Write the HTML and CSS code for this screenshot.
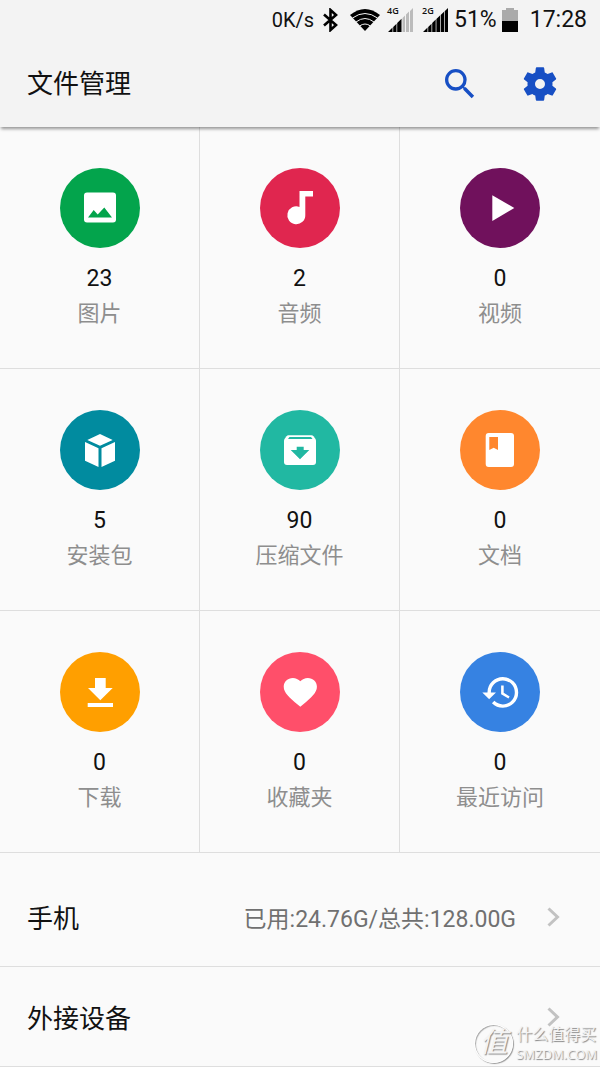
FILE: index.html
```html
<!DOCTYPE html>
<html lang="zh-CN">
<head>
<meta charset="utf-8">
<meta name="viewport" content="width=device-width, initial-scale=1">
<title>文件管理</title>
<link rel="stylesheet" href="styles.css">
</head>
<body>
<div class="status">
  <span class="speed">0K/s</span>
  <svg class="bluetooth" width="15" height="24" viewBox="0 0 15 24" aria-hidden="true"><path d="M1 6.500 L13 17 L7.500 22 V2 L13 7 L1 17.500" fill="none" stroke="#000" stroke-width="2.600"/></svg>
  <svg class="wifi" width="30" height="22" viewBox="0 0 30 22" aria-hidden="true">
    <path d="M15 22 L0 6 Q15 -6 30 6 Z" fill="#000"/>
    <path d="M2.500 9 Q15 0 27.500 9 M6 13 Q15 6 24 13 M9.500 17 Q15 13 20.500 17" fill="none" stroke="#f3f3f3" stroke-width="1"/>
  </svg>
  <span class="signal">
    <svg width="26" height="24" viewBox="0 0 26 24" aria-hidden="true"><path d="M0 24 L4.500 19.500 V24Z M5.200 24 V19 L8.500 15.700 V24Z M9.200 24 V15 L13.500 10.700 V24Z" fill="#000"/><path d="M14.500 24 V10 L17 7.500 V24Z M18 24 V6.500 L21 3.500 V24Z M22 24 V3 L25 0 V24Z" fill="#bbb"/></svg>
    <span class="network">4G</span>
  </span>
  <span class="signal">
    <svg width="26" height="24" viewBox="0 0 26 24" aria-hidden="true"><path d="M0 24 L4.500 19.500 V24Z M5.200 24 V19 L8.500 15.700 V24Z M9.200 24 V15 L12.700 11.500 V24Z M13.400 24 V11 L17 7.400 V24Z M17.700 24 V7 L21 3.700 V24Z M21.700 24 V3.300 L25 0 V24Z" fill="#000"/></svg>
    <span class="network">2G</span>
  </span>
  <span class="percent">51%</span>
  <svg class="battery" width="16" height="24" viewBox="0 0 16 24" aria-hidden="true"><path d="M0 2H4V0H12V2H16V13H0Z" fill="#aaa"/><path d="M0 13H16V24H0Z" fill="#000"/></svg>
  <time class="clock">17:28</time>
</div>

<header class="appbar">
  <h1 class="title">文件管理</h1>
  <button class="action" type="button" aria-label="搜索"><svg width="40" height="40" viewBox="0 0 24 24"><path d="M15.500 14h-.79l-.28-.27A6.471 6.471 0 0 0 16 9.500 6.500 6.500 0 1 0 9.500 16c1.610 0 3.090-.59 4.230-1.570l.27.28v.79l5 4.990L20.490 19l-4.990-5zm-6 0C7.010 14 5 11.990 5 9.500S7.010 5 9.500 5 14 7.010 14 9.500 11.990 14 9.500 14z"/></svg></button>
  <button class="action" type="button" aria-label="设置"><svg width="40" height="40" viewBox="0 0 24 24"><path d="M19.430 12.980c.04-.32.07-.64.07-.98s-.03-.66-.07-.98l2.110-1.650c.19-.15.24-.42.12-.64l-2-3.460c-.12-.22-.39-.3-.61-.22l-2.490 1c-.52-.4-1.080-.73-1.690-.98l-.38-2.650A.488.488 0 0 0 14 2h-4c-.25 0-.46.18-.49.42l-.38 2.650c-.61.25-1.170.59-1.690.98l-2.490-1c-.23-.09-.49 0-.61.22l-2 3.460c-.13.22-.07.49.12.64l2.110 1.650c-.04.32-.07.65-.07.98s.03.66.07.98l-2.110 1.650c-.19.15-.24.42-.12.64l2 3.460c.12.22.39.3.61.22l2.490-1c.52.4 1.080.73 1.690.98l.38 2.650c.03.24.24.42.49.42h4c.25 0 .46-.18.49-.42l.38-2.650c.61-.25 1.170-.59 1.690-.98l2.490 1c.23.09.49 0 .61-.22l2-3.460c.12-.22.07-.49-.12-.64l-2.110-1.650zM12 15a3 3 0 1 1 0-6 3 3 0 0 1 0 6z"/></svg></button>
</header>

<main>
  <nav class="grid" aria-label="分类">
    <a class="cell" href="#images">
      <svg class="icon green" viewBox="0 0 80 80"><rect x="24" y="24.500" width="32" height="30" rx="3"/><path class="cut" d="M28 49.500 L33.700 42 L37.700 46.500 L44.300 39.500 L52 49.500Z"/></svg>
      <span class="count">23</span><span class="label">图片</span>
    </a>
    <a class="cell" href="#audio">
      <svg class="icon red" viewBox="0 0 80 80"><path d="M39.500 23H53V28.500H45.300V47A9 9 0 1 1 39.500 38.900Z"/></svg>
      <span class="count">2</span><span class="label">音频</span>
    </a>
    <a class="cell" href="#video">
      <svg class="icon purple" viewBox="0 0 80 80"><path d="M32.300 27.300 L54.300 40 L32.300 53Z"/></svg>
      <span class="count">0</span><span class="label">视频</span>
    </a>
    <a class="cell" href="#packages">
      <svg class="icon teal" viewBox="0 0 80 80"><path d="M40 24 L52.700 30 L40 35.700 L27.300 30Z M25 32 L38.500 38.300 V57 L25 50.700Z M55 32 L41.500 38.300 V57 L55 50.700Z"/></svg>
      <span class="count">5</span><span class="label">安装包</span>
    </a>
    <a class="cell" href="#archives">
      <svg class="icon mint" viewBox="0 0 80 80"><path d="M28.500 25.300H51.500Q52.700 25.300 53.500 26.300L55.300 28.700Q56 29.700 56 31V52Q56 55 53 55H27Q24 55 24 52V31Q24 29.700 24.700 28.700L26.500 26.300Q27.300 25.300 28.500 25.300Z"/><path class="cut" d="M29.500 27H51L52.500 29H28Z M36.700 36.700H43.700V40H49.300L40 49.300L30.700 40H36.700Z"/></svg>
      <span class="count">90</span><span class="label">压缩文件</span>
    </a>
    <a class="cell" href="#documents">
      <svg class="icon orange" viewBox="0 0 80 80"><rect x="25.700" y="23" width="28.300" height="34" rx="3"/><path class="cut" d="M29.300 27H38V40L33.700 37.700L29.300 40Z"/></svg>
      <span class="count">0</span><span class="label">文档</span>
    </a>
    <a class="cell" href="#downloads">
      <svg class="icon amber" viewBox="0 0 80 80"><path d="M35 26H45.700V36H52.700L40.300 48.300L28 36H35Z M27.700 51H53V55H27.700Z"/></svg>
      <span class="count">0</span><span class="label">下载</span>
    </a>
    <a class="cell" href="#favorites">
      <svg class="icon pink" viewBox="0 0 80 80"><path transform="translate(20.400 21.300) scale(1.660 1.570)" d="M12 21.350l-1.450-1.320C5.400 15.360 2 12.280 2 8.500 2 5.420 4.420 3 7.500 3c1.740 0 3.410.81 4.500 2.090C13.090 3.810 14.760 3 16.500 3 19.580 3 22 5.420 22 8.500c0 3.780-3.400 6.860-8.550 11.540L12 21.350z"/></svg>
      <span class="count">0</span><span class="label">收藏夹</span>
    </a>
    <a class="cell" href="#recent">
      <svg class="icon blue" viewBox="0 0 80 80"><path transform="translate(20.600 19.900) scale(1.710)" d="M13 3a9 9 0 0 0-9 9H1l3.890 3.890.07.14L9 12H6c0-3.870 3.130-7 7-7s7 3.130 7 7-3.130 7-7 7c-1.930 0-3.680-.79-4.940-2.060l-1.420 1.420A8.954 8.954 0 0 0 13 21a9 9 0 0 0 0-18zm-1 5v5l4.280 2.540.72-1.210-3.500-2.080V8H12z"/></svg>
      <span class="count">0</span><span class="label">最近访问</span>
    </a>
  </nav>

  <div class="storage">
    <a class="row" href="#phone">
      <span class="name">手机</span>
      <span class="usage">已用:24.76G/总共:128.00G</span>
      <svg class="chevron" width="13" height="20" viewBox="0 0 13 20" aria-hidden="true"><path d="M1.500 1.500 L10.500 10 L1.500 18.500"/></svg>
    </a>
    <a class="row" href="#external">
      <span class="name">外接设备</span>
      <svg class="chevron" width="13" height="20" viewBox="0 0 13 20" aria-hidden="true"><path d="M1.500 1.500 L10.500 10 L1.500 18.500"/></svg>
    </a>
    <div class="watermark">
      <span class="seal">值</span>
      <span class="brand"><span class="brand-name">什么值得买</span><span class="brand-site">SMZDM.COM</span></span>
    </div>
  </div>
</main>
</body>
</html>
```
FILE: styles.css
```css
* {
  box-sizing: border-box;
}

body {
  margin: 0;
  background: #fafafa;
  color: #111;
  font-family: Roboto, "Noto Sans CJK SC", sans-serif;
}

a {
  color: inherit;
  text-decoration: none;
}

svg {
  display: block;
  flex: none;
}

.status {
  display: flex;
  align-items: center;
  justify-content: flex-end;
  height: 40px;
  padding-right: 13px;
  background: #f3f3f3;
  color: #111;
  font-size: 23px;
  line-height: 42px;
}

.speed {
  font-size: 20px;
}

.bluetooth {
  margin-left: 9px;
}

.wifi {
  margin-left: 12px;
}

.signal {
  position: relative;
  margin-left: 9px;
}

.wifi + .signal {
  margin-left: 8px;
}

.network {
  position: absolute;
  top: -2px;
  left: -1px;
  font: 600 9px/10px "Open Sans", sans-serif;
}

.percent {
  margin-left: 5px;
}

.battery {
  margin-left: 5px;
}

.clock {
  margin-left: 12px;
}

.appbar {
  position: relative;
  display: flex;
  align-items: center;
  gap: 40px;
  height: 87px;
  padding: 0 40px 0 27px;
  background: #f3f3f3;
  box-shadow: 0 3px 3px -1px rgba(0, 0, 0, 0.4);
}

.title {
  flex: 1;
  margin: 0;
  font-size: 26px;
  font-weight: 400;
  line-height: 40px;
}

.action {
  padding: 0;
  border: 0;
  background: none;
  fill: #174fc4;
}

.grid {
  display: grid;
  grid-template-columns: repeat(3, 1fr);
}

.cell {
  display: flex;
  flex-direction: column;
  align-items: center;
  padding: 41px 0 36px;
  border-right: 1px solid #dedede;
  border-bottom: 1px solid #dedede;
}

.cell:nth-child(3n) {
  border-right: 0;
}

.icon {
  width: 80px;
  height: 80px;
  border-radius: 50%;
  fill: #fff;
  background: currentColor;
}

.cut {
  fill: currentColor;
}

.green { color: #03a44c; }
.red { color: #e0264f; }
.purple { color: #70115c; }
.teal { color: #018b9f; }
.mint { color: #21b8a2; }
.orange { color: #ff872e; }
.amber { color: #ff9f00; }
.pink { color: #ff4f6a; }
.blue { color: #3682e2; }

.count {
  margin-top: 14px;
  font-size: 23px;
  line-height: 34px;
}

.label {
  color: #8e8e8e;
  font-size: 22px;
  line-height: 36px;
}

.storage {
  position: relative;
  padding-top: 14px;
}

.row {
  display: flex;
  align-items: center;
  height: 100px;
  padding: 0 40px 0 27px;
  border-bottom: 1px solid #dedede;
}

.name {
  flex: 1;
  font-size: 26px;
}

.usage {
  margin-right: 31px;
  color: #707070;
  font-size: 23px;
}

.chevron {
  fill: none;
  stroke: #c2c2c2;
  stroke-width: 3px;
}

.watermark {
  position: absolute;
  right: 3px;
  bottom: 4px;
  display: flex;
  align-items: center;
  gap: 3px;
  color: #f4f4f4;
  text-shadow: 1px 1px 1px #888;
}

.seal {
  width: 39px;
  height: 39px;
  border: 1px solid #fff;
  border-radius: 50%;
  box-shadow: 1px 1px 1px #999, inset 1px 1px 1px #aaa;
  font-size: 28px;
  font-style: italic;
  line-height: 36px;
  text-align: center;
}

.brand {
  display: flex;
  flex-direction: column;
}

.brand-name {
  font-size: 16px;
  line-height: 20px;
}

.brand-site {
  font-family: "Open Sans", sans-serif;
  font-size: 13px;
  line-height: 18px;
}
```
